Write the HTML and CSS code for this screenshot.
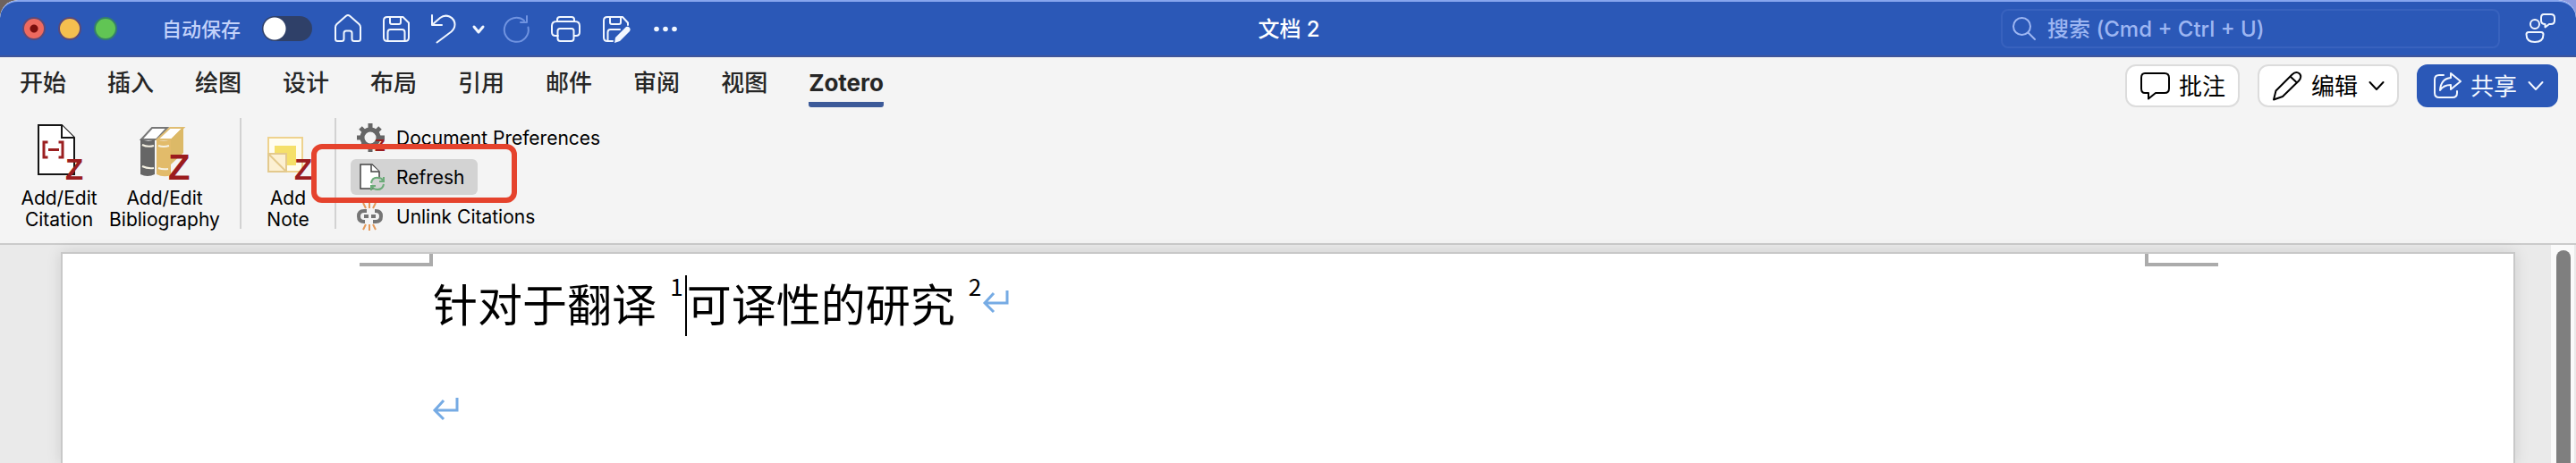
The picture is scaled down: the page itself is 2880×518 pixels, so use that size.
FILE: index.html
```html
<!DOCTYPE html>
<html lang="zh-CN">
<head>
<meta charset="utf-8">
<title>文档 2</title>
<link rel="stylesheet" href="styles.css">
</head>
<body>
<div class="window">
  <header class="titlebar">
    <div class="titlebar-left">
      <div class="lights">
        <button class="light light-close" aria-label="关闭"></button>
        <button class="light light-min" aria-label="最小化"></button>
        <button class="light light-max" aria-label="缩放"></button>
      </div>
      <label class="autosave"><span>自动保存</span><input type="checkbox" class="switch" role="switch"></label>
      <div class="quick">
        <button class="quick-btn" aria-label="主页"><svg width="30" height="32" viewBox="0 0 30 32"><path d="M1 14.500Q1 12.500 2.500 11L13 1.800Q15 .2 17 1.800L27.500 11Q29 12.500 29 14.500V27.500Q29 30 26.500 30H22Q19.500 30 19.500 27.500V21Q19.500 18.500 17 18.500H13Q10.500 18.500 10.500 21V27.500Q10.500 30 8 30H3.500Q1 30 1 27.500Z"/></svg></button>
        <button class="quick-btn" aria-label="保存"><svg width="30" height="32" viewBox="0 0 30 32"><path d="M5 3H22.500L29 9.500V26Q29 30 25 30H5Q1 30 1 26V7Q1 3 5 3ZM8 3V9Q8 11 10 11H18Q20 11 20 9V3M5.500 30V20Q5.500 17 8.500 17H21.500Q24.500 17 24.500 20V30"/></svg></button>
        <button class="quick-btn" aria-label="撤销"><svg width="28" height="32" viewBox="0 0 28 32"><path d="M1 1V12H12M1.500 11.500L10 4Q15 .2 20.500 2.500Q26.500 5.500 26.500 11.500Q26.500 16 22.500 19.500L6.500 31.500"/></svg></button>
        <button class="quick-btn chevron-btn" aria-label="撤销选项"><svg width="14" height="32" viewBox="0 0 14 32"><path d="M2 14L7 20L12 14" stroke-width="3"/></svg></button>
        <button class="quick-btn" aria-label="恢复" disabled><svg width="30" height="32" viewBox="0 0 30 32"><path d="M28.500 14.500A13.500 13.500 0 1 1 24 7M27 2V9H20"/></svg></button>
        <button class="quick-btn" aria-label="打印"><svg width="34" height="32" viewBox="0 0 34 32"><path d="M8 24H5Q1 24 1 20V13Q1 8 6 8H27Q32 8 32 13V20Q32 24 28 24H25.500M7 8V6Q7 3 10 3H23Q26 3 26 6V8M10 16H23Q25.500 16 25.500 18.500V27Q25.500 30 22.500 30H10.500Q7.500 30 7.500 27V18.500Q7.500 16 10 16Z"/></svg></button>
        <button class="quick-btn" aria-label="另存为"><svg width="32" height="32" viewBox="0 0 32 32"><path d="M28 12V9.500L22 3H5Q1 3 1 7V26Q1 30 5 30H11M8 3V9Q8 11 10 11H18Q20 11 20 9V3M5.500 30V20Q5.500 17 8.500 17H19"/><path class="solid" d="M26 14Q28 13 30 15Q31.500 17 30 19L19 30L13 32L14 26Z"/></svg></button>
        <button class="quick-btn" aria-label="更多"><svg width="28" height="32" viewBox="0 0 28 32"><g class="solid"><circle cx="4" cy="16.500" r="2.800"/><circle cx="14" cy="16.500" r="2.800"/><circle cx="24" cy="16.500" r="2.800"/></g></svg></button>
      </div>
    </div>
    <h1 class="doc-name">文档 2</h1>
    <div class="titlebar-right">
      <label class="search"><svg width="28" height="28" viewBox="0 0 28 28"><circle cx="11.500" cy="11.500" r="9.500"/><path d="M18.500 18.500L26 26"/></svg><input type="text" aria-label="搜索" placeholder="搜索 (Cmd + Ctrl + U)"></label>
      <button class="quick-btn" aria-label="联系支持"><svg width="34" height="34" viewBox="0 0 34 34"><circle cx="11" cy="12" r="5"/><path d="M4 21H18Q20.500 21 20.500 23.500Q20.500 32 11 32Q1.500 32 1.500 23.500Q1.500 21 4 21ZM21 1H29Q33 1 33 5V8Q33 12 29 12H27L22.500 15.500V12Q18 12 18 8V5Q18 1 21 1Z"/></svg></button>
    </div>
  </header>

  <div class="tabbar">
    <nav class="tabs">
      <button class="tab">开始</button>
      <button class="tab">插入</button>
      <button class="tab">绘图</button>
      <button class="tab">设计</button>
      <button class="tab">布局</button>
      <button class="tab">引用</button>
      <button class="tab">邮件</button>
      <button class="tab">审阅</button>
      <button class="tab">视图</button>
      <button class="tab tab-active">Zotero</button>
    </nav>
    <div class="actions">
      <button class="action"><svg width="34" height="32" viewBox="0 0 34 32"><path d="M6 2H28Q33 2 33 7V19Q33 24 28 24H18L10 30.500V24H6Q2 24 2 19V7Q2 2 6 2Z"/></svg><span>批注</span></button>
      <button class="action"><svg width="34" height="34" viewBox="0 0 34 34"><path d="M22.500 4.500Q27 0 31 3.500Q34 7 30 11.500L12 29L2 32.500L4.500 22.500ZM20.500 6.500L28 13.500"/></svg><span>编辑</span><svg class="caret" width="18" height="12" viewBox="0 0 18 12"><path d="M1.500 2L9 10L16.500 2"/></svg></button>
      <button class="action action-share"><svg width="34" height="32" viewBox="0 0 34 32"><path d="M14 4H9Q4 4 4 9V24Q4 29 9 29H24Q29 29 29 24V22M22 2L33 11L22 20V15Q14 15 10 21Q11 8 22 7Z"/></svg><span>共享</span><svg class="caret" width="18" height="12" viewBox="0 0 18 12"><path d="M1.500 2L9 10L16.500 2"/></svg></button>
    </div>
  </div>

  <div class="ribbon">
    <div class="group">
      <button class="big"><svg width="54" height="64" viewBox="0 0 54 64"><path d="M4 1H30L44 15V56H4Z" fill="#fff" stroke="#151515" stroke-width="2"/><path d="M30 1V15H44" fill="#fff" stroke="#151515" stroke-width="2"/><path d="M14.500 20H10V37H14.500M26.500 20H31V37H26.500M15 28.500H27" fill="none" stroke="#9b1f20" stroke-width="3"/><text class="zed" x="34" y="62" font-size="33">Z</text></svg><span>Add/Edit<br>Citation</span></button>
      <button class="big big-wide"><svg width="58" height="64" viewBox="0 0 58 64"><path d="M3 17L15 4H32L20 17Z" fill="#fff" stroke="#777" stroke-width="2"/><path d="M2 16Q10 21 18 17V56Q10 60 2 56Z" fill="#666"/><path d="M21 17L35 4H50L37 17Z" fill="#fff" stroke="#e0bd72" stroke-width="2"/><path d="M20 17Q28 20 36 17V57Q28 60 20 56Z" fill="#e2bb6a"/><path d="M36 17L50 3V32L36 45Z" fill="#dcb967"/><path d="M4 23Q10 26 17 24M4 47Q10 50 17 49M22 24Q28 26 34 24M22 49Q27 51 33 50" fill="none" stroke="#f6f2e4" stroke-width="2"/><text class="zed" x="33" y="62" font-size="40">Z</text></svg><span>Add/Edit<br>Bibliography</span></button>
    </div>
    <div class="group">
      <button class="big big-note"><svg width="54" height="64" viewBox="0 0 54 64"><path d="M5 15H43V53H5Z" fill="#fffdf0" stroke="#eed28e" stroke-width="2"/><path d="M12 24H36V46H12Z" fill="#f5e06a"/><path d="M5 33H25V53H5Z" fill="#fcf0d2" stroke="#e3c98d" stroke-width="2"/><path d="M5 33L25 53" stroke="#e3c98d" stroke-width="2"/><text class="zed" x="34" y="62" font-size="33">Z</text></svg><span>Add<br>Note</span></button>
    </div>
    <div class="group group-list">
      <button class="row"><svg width="34" height="34" viewBox="0 0 34 34"><circle cx="16" cy="17" r="9" fill="none" stroke="#666" stroke-width="5"/><path d="M16 1V7M16 27V33M1 17H6M26 17H32M5 6L9 10M27 6L23 10M5 28L9 24" stroke="#666" stroke-width="5"/><text class="zed" x="21" y="32" font-size="19">Z</text></svg><span>Document Preferences</span></button>
      <button class="row row-current"><svg width="34" height="34" viewBox="0 0 34 34"><path d="M5 3H18L26 11V30H5Z" fill="#fff" stroke="#444" stroke-width="1.500"/><path d="M17 3V11H26" fill="#fff" stroke="#444" stroke-width="1.500"/><circle cx="24.500" cy="24.500" r="7" fill="#d3d3d3"/><path d="M17 24Q18 17 25 18Q29 18 30 21M31 17V22H26M31 25Q30 31 24 31Q20 31 18 28M17 32V27H22" fill="none" stroke="#6bab78" stroke-width="2"/></svg><span>Refresh</span></button>
      <button class="row"><svg width="34" height="34" viewBox="0 0 34 34"><path d="M12 11H9Q3 11 3 17Q3 23 9 23H10M9 17H14M21 11H22Q28 11 28 17Q28 23 22 23H19M17 17H22" fill="none" stroke="#757575" stroke-width="4"/><path d="M15 1V8M8 2L11 8M22 2L19 8M15 26V33M8 32L11 26M22 32L19 26" stroke="#e59a5a" stroke-width="2"/></svg><span>Unlink Citations</span></button>
      <div class="callout"></div>
    </div>
  </div>

  <main class="canvas">
    <article class="page">
      <div class="margins"><i class="mark mark-left"></i><i class="mark mark-right"></i></div>
      <p class="line">针对于翻译 <sup>1</sup><i class="cursor"></i>可译性的研究 <sup>2</sup><svg class="return" width="28" height="28" viewBox="0 0 28 28"><path d="M27 1V15H2M12 4L2 15L12 25"/></svg></p>
      <p class="line"><svg class="return" width="28" height="28" viewBox="0 0 28 28"><path d="M27 1V15H2M12 4L2 15L12 25"/></svg></p>
    </article>
    <div class="scroll"><div class="thumb"></div></div>
  </main>
</div>
</body>
</html>
```
FILE: styles.css
```css
* { box-sizing: border-box; }
body {
  margin: 0;
  background: linear-gradient(90deg, #6d625e 50%, #8e9be0 50%);
  font-family: Inter, "Noto Sans CJK SC", sans-serif;
  color: #262626;
}
button {
  font: inherit;
  color: inherit;
  background: none;
  border: 0;
  padding: 0;
}
svg { display: block; flex: none; overflow: visible; }
.window {
  display: flex;
  flex-direction: column;
  height: 100vh;
  border-radius: 20px 20px 0 0;
  overflow: hidden;
  background: #f4f4f4;
}

/* title bar */
.titlebar {
  flex: none;
  display: grid;
  grid-template-columns: 1fr auto 1fr;
  align-items: center;
  height: 64px;
  padding: 0 23px 0 25px;
  background: #2b58b7;
  border-top: 2px solid #86a5ee;
  border-bottom: 2px solid #3f559a;
  border-radius: 20px 20px 0 0;
}
.titlebar-left, .titlebar-right, .lights, .quick { display: flex; align-items: center; }
.lights { gap: 14px; }
.light {
  width: 26px;
  height: 26px;
  border-radius: 50%;
  border: 2px solid #5b4a78;
}
.light-close { background: radial-gradient(circle, #7c0f0c 4px, #ee6a5f 5px); }
.light-min { background: #f5bf4f; }
.light-max { background: #61c554; border-color: #35806a; }
.autosave {
  display: flex;
  align-items: center;
  gap: 24px;
  margin-left: 50px;
  font-size: 22px;
  font-weight: 500;
  color: #c3d2fa;
}
.autosave span, .doc-name, .action span { padding-bottom: 3px; }
.switch {
  appearance: none;
  width: 56px;
  height: 28px;
  margin: 0;
  border-radius: 14px;
  background: radial-gradient(circle at 14px 14px, #fff 12px, #2f4068 13px);
}
.quick { gap: 24px; margin-left: 25px; }
.quick-btn svg, .search svg, .action svg {
  fill: none;
  stroke: currentColor;
  stroke-width: 2;
  stroke-linejoin: round;
  stroke-linecap: round;
}
.quick-btn { color: #f2f7ff; }
.quick-btn:disabled { color: #7093e0; }
.chevron-btn { margin: 0 -4px 0 -6px; }
.quick-btn .solid { fill: currentColor; stroke: none; }
.doc-name {
  margin: 0;
  font-size: 24px;
  font-weight: 500;
  color: #fff;
}
.titlebar-right { justify-content: flex-end; gap: 28px; }
.search {
  display: flex;
  align-items: center;
  gap: 12px;
  width: 558px;
  height: 44px;
  padding-left: 10px;
  border: 2px solid #3862be;
  border-radius: 8px;
  color: #9db6f2;
}
.search input {
  flex: 1;
  min-width: 0;
  padding: 0;
  border: 0;
  background: none;
  font: inherit;
  font-size: 24px;
  font-weight: 500;
  color: inherit;
}
.search input::placeholder { color: #9db6f2; opacity: 1; }

/* tabs */
.tabbar {
  flex: none;
  display: flex;
  justify-content: space-between;
  height: 62px;
  padding: 8px 20px 0 22px;
}
.tabs { display: flex; gap: 46px; height: 48px; }
.tab {
  height: 48px;
  padding-bottom: 6px;
  font-size: 26px;
  line-height: 42px;
  font-weight: 500;
}
.tab-active {
  font-weight: 700;
  background: linear-gradient(#3c5a99, #3c5a99) bottom / 100% 6px no-repeat;
  border-radius: 3px;
}
.actions { display: flex; gap: 20px; height: 48px; }
.action {
  display: flex;
  align-items: center;
  gap: 10px;
  padding: 0 14px;
  border: 2px solid #dcdcdc;
  border-radius: 12px;
  background: #fff;
  color: #000;
  font-size: 26px;
}
.action .caret { margin-left: 2px; }
.action-share { background: #2b58b7; border-color: #2b58b7; color: #f2f7ff; }

/* ribbon */
.ribbon {
  flex: none;
  display: flex;
  height: 148px;
  padding: 6px 0 16px 12px;
  border-bottom: 2px solid #cbcbcb;
  color: #000;
  font-size: 21px;
}
.group { display: flex; border-right: 2px solid #d2d2d2; }
.group:first-child { width: 258px; }
.big {
  display: flex;
  flex-direction: column;
  align-items: center;
  gap: 7px;
  padding-top: 7px;
  width: 108px;
  line-height: 24px;
}
.big-wide { width: 128px; }
.big-note { width: 104px; }
.zed { font-family: "Liberation Sans", sans-serif; font-weight: 700; fill: #9b1c1e; }
.group-list {
  position: relative;
  flex-direction: column;
  align-items: flex-start;
  gap: 4px;
  margin: 2px 0 0 16px;
  border-right: 0;
}
.row {
  flex: none;
  display: flex;
  align-items: center;
  gap: 11px;
  height: 40px;
  padding: 0 14px 0 6px;
  border-radius: 6px;
}
.row-current { background: #d3d3d3; }
.callout {
  position: absolute;
  left: -44px;
  top: 27px;
  width: 230px;
  height: 66px;
  border: 6px solid #e5432d;
  border-radius: 12px;
  pointer-events: none;
}

/* document */
.canvas {
  flex: 1;
  min-height: 0;
  display: flex;
  padding: 8px 2px 0 68px;
  background: #eaeaea;
}
.page {
  flex: 1;
  background: #fff;
  border: 2px solid #c8c8c8;
  border-bottom: 0;
  box-shadow: 0 0 16px rgba(0, 0, 0, 0.12);
}
.margins {
  display: flex;
  justify-content: space-between;
  align-items: flex-start;
  height: 10px;
  padding: 0 330px 0 332px;
}
.mark { width: 82px; height: 14px; border-bottom: 4px solid #ababab; }
.mark-left { border-right: 4px solid #ababab; }
.mark-right { border-left: 4px solid #ababab; }
.line {
  display: flex;
  align-items: flex-start;
  height: 120px;
  margin: 0;
  padding: 0 414px;
  font-family: "Noto Sans CJK SC", sans-serif;
  font-size: 50px;
  line-height: 88px;
  color: #000;
  white-space: pre;
}
.line sup { margin: 0 2px 0 4px; font-size: 26px; line-height: 52px; }
.cursor { width: 2px; height: 68px; margin-top: 14px; background: #000; }
.return { margin-top: 30px; fill: none; stroke: #76abe4; stroke-width: 3; }
.scroll {
  width: 26px;
  margin: -8px 0 0 40px;
  padding: 6px 4px 0 6px;
  background: #fafafa;
}
.thumb { height: 100%; border-radius: 8px 8px 0 0; background: #7f7f7f; }
```
